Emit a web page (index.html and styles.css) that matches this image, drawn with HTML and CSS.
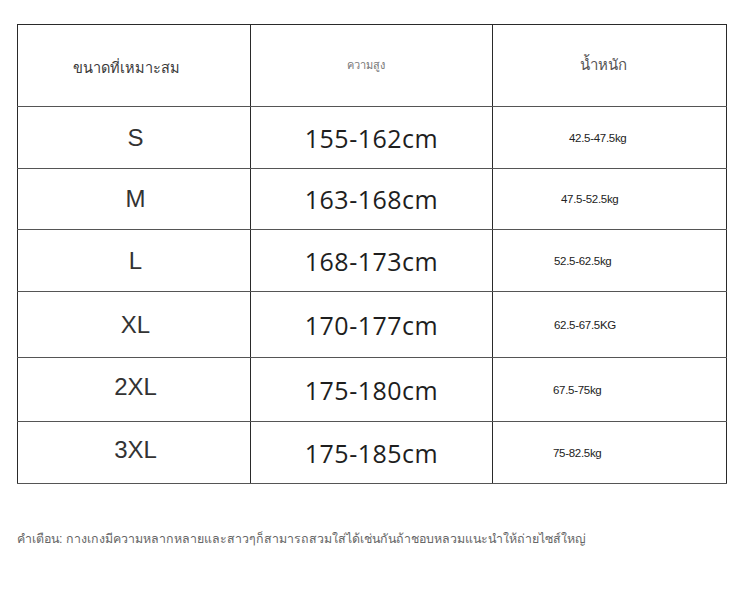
FILE: index.html
```html
<!DOCTYPE html>
<html lang="th">
<head>
<meta charset="utf-8">
<link rel="stylesheet" href="styles.css">
</head>
<body>
<div class="page">
  <table class="chart">
    <colgroup>
      <col class="col-size">
      <col class="col-height">
      <col class="col-weight">
    </colgroup>
    <tr class="head">
      <th class="h-size">ขนาดที่เหมาะสม</th>
      <th class="h-height">ความสูง</th>
      <th class="h-weight">น้ำหนัก</th>
    </tr>
    <tr class="r1"><td class="size">S</td><td class="height">155-162cm</td><td class="weight w1">42.5-47.5kg</td></tr>
    <tr class="r2"><td class="size">M</td><td class="height">163-168cm</td><td class="weight w2">47.5-52.5kg</td></tr>
    <tr class="r3"><td class="size">L</td><td class="height">168-173cm</td><td class="weight w3">52.5-62.5kg</td></tr>
    <tr class="r4"><td class="size">XL</td><td class="height">170-177cm</td><td class="weight w3">62.5-67.5KG</td></tr>
    <tr class="r5"><td class="size up">2XL</td><td class="height">175-180cm</td><td class="weight w4">67.5-75kg</td></tr>
    <tr class="r6"><td class="size up">3XL</td><td class="height">175-185cm</td><td class="weight w4">75-82.5kg</td></tr>
  </table>
  <p class="note">คำเตือน: กางเกงมีความหลากหลายและสาวๆก็สามารถสวมใส่ได้เช่นกันถ้าชอบหลวมแนะนำให้ถ่ายไซส์ใหญ่</p>
</div>
</body>
</html>
```
FILE: styles.css
```css
html, body {
  margin: 0;
  padding: 0;
  background: #ffffff;
}
.page {
  padding: 24px 0 0 17px;
  font-family: "Liberation Sans", "Noto Sans", sans-serif;
}
.chart {
  border-collapse: collapse;
  width: 709px;
  table-layout: fixed;
}
.col-size { width: 233px; }
.col-height { width: 242px; }
.col-weight { width: 234px; }
.chart th, .chart td {
  border: 1px solid #2a2a2a;
  padding: 0;
  text-align: center;
  vertical-align: middle;
  box-sizing: border-box;
}
.chart td, .chart th {
  border-bottom-color: #555;
}
.head { height: 82px; }
.head th {
  font-weight: normal;
  color: #3a3a3a;
}
.head .h-size { font-size: 14.5px; padding: 4px 16px 0 0; }
.head .h-height { font-size: 11px; color: #777; padding: 0 12px 2px 0; }
.head .h-weight { font-size: 15px; color: #555; padding: 0 12px 2px 0; }
.r1 { height: 62px; }
.r2 { height: 61px; }
.r3 { height: 62px; }
.r4 { height: 66px; }
.r5 { height: 64px; }
.r6 { height: 62px; }
.chart .size {
  font-size: 24px;
  color: #333;
  padding-left: 3px;
}
.chart .size.up { padding-bottom: 6px; }
.height {
  font-family: "Open Sans", "Noto Sans", sans-serif;
  font-size: 25px;
  letter-spacing: 0.5px;
  color: #1e1e1e;
}
.chart .weight {
  font-size: 11.5px;
  color: #222;
  text-align: left;
  letter-spacing: -0.3px;
}
.chart .w1 { padding-left: 76px; }
.chart .w2 { padding-left: 68px; }
.chart .w3 { padding-left: 61px; }
.chart .w4 { padding-left: 60px; }
.note {
  margin: 45px 0 0 0;
  font-size: 12.4px;
  color: #666;
  white-space: nowrap;
}
```
